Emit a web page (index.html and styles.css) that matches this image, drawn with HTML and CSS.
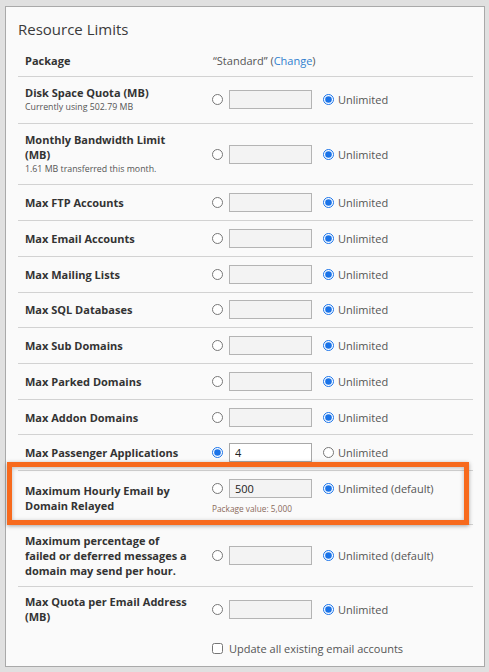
FILE: index.html
```html
<!DOCTYPE html>
<html lang="en">
<head>
<meta charset="utf-8">
<title>Resource Limits</title>
<link rel="stylesheet" href="styles.css">
</head>
<body>
<div class="panel">
  <h2 class="title">Resource Limits</h2>
  <div class="table">
    <div class="row row-pkg">
      <div class="lbl">Package</div>
      <div class="ctl pkg">“Standard” (<a href="#">Change</a>)</div>
    </div>
    <div class="row">
      <div class="lbl">Disk Space Quota (MB)<div class="sub">Currently using 502.79 MB</div></div>
      <div class="ctl"><input type="radio" name="r1"><input type="text" class="txt" disabled><input type="radio" name="r1" checked><span class="unl">Unlimited</span></div>
    </div>
    <div class="row">
      <div class="lbl">Monthly Bandwidth Limit (MB)<div class="sub">1.61 MB transferred this month.</div></div>
      <div class="ctl"><input type="radio" name="r2"><input type="text" class="txt" disabled><input type="radio" name="r2" checked><span class="unl">Unlimited</span></div>
    </div>
    <div class="row">
      <div class="lbl">Max FTP Accounts</div>
      <div class="ctl"><input type="radio" name="r3"><input type="text" class="txt" disabled><input type="radio" name="r3" checked><span class="unl">Unlimited</span></div>
    </div>
    <div class="row">
      <div class="lbl">Max Email Accounts</div>
      <div class="ctl"><input type="radio" name="r4"><input type="text" class="txt" disabled><input type="radio" name="r4" checked><span class="unl">Unlimited</span></div>
    </div>
    <div class="row">
      <div class="lbl">Max Mailing Lists</div>
      <div class="ctl"><input type="radio" name="r5"><input type="text" class="txt" disabled><input type="radio" name="r5" checked><span class="unl">Unlimited</span></div>
    </div>
    <div class="row">
      <div class="lbl">Max SQL Databases</div>
      <div class="ctl"><input type="radio" name="r6"><input type="text" class="txt" disabled><input type="radio" name="r6" checked><span class="unl">Unlimited</span></div>
    </div>
    <div class="row">
      <div class="lbl">Max Sub Domains</div>
      <div class="ctl"><input type="radio" name="r7"><input type="text" class="txt" disabled><input type="radio" name="r7" checked><span class="unl">Unlimited</span></div>
    </div>
    <div class="row">
      <div class="lbl">Max Parked Domains</div>
      <div class="ctl"><input type="radio" name="r8"><input type="text" class="txt" disabled><input type="radio" name="r8" checked><span class="unl">Unlimited</span></div>
    </div>
    <div class="row">
      <div class="lbl">Max Addon Domains</div>
      <div class="ctl"><input type="radio" name="r9"><input type="text" class="txt" disabled><input type="radio" name="r9" checked><span class="unl">Unlimited</span></div>
    </div>
    <div class="row">
      <div class="lbl">Max Passenger Applications</div>
      <div class="ctl"><input type="radio" name="r10" checked><input type="text" class="txt on" value="4"><input type="radio" name="r10"><span class="unl">Unlimited</span></div>
    </div>
    <div class="row row-hl">
      <div class="lbl">Maximum Hourly Email by Domain Relayed</div>
      <div class="ctl-stack">
        <div class="ctl"><input type="radio" name="r11"><input type="text" class="txt" value="500" disabled><input type="radio" name="r11" checked><span class="unl">Unlimited (default)</span></div>
        <div class="help">Package value: 5,000</div>
      </div>
      <div class="highlight"></div>
    </div>
    <div class="row">
      <div class="lbl">Maximum percentage of failed or deferred messages a domain may send per hour.</div>
      <div class="ctl"><input type="radio" name="r12"><input type="text" class="txt" disabled><input type="radio" name="r12" checked><span class="unl">Unlimited (default)</span></div>
    </div>
    <div class="row row-last">
      <div class="lbl">Max Quota per Email Address (MB)</div>
      <div class="ctl"><input type="radio" name="r13"><input type="text" class="txt" disabled><input type="radio" name="r13" checked><span class="unl">Unlimited</span></div>
    </div>
    <div class="row row-check">
      <div class="lbl"></div>
      <label class="ctl"><input type="checkbox"><span class="unl chk">Update all existing email accounts</span></label>
    </div>
  </div>
</div>
</body>
</html>
```

FILE: styles.css
```css
html, body {
  margin: 0;
  padding: 0;
}
body {
  background: #e0e0e0;
  padding: 6px 5px 0 5px;
  font-family: "Open Sans", "Noto Sans", sans-serif;
  color: #333;
}
.panel {
  position: relative;
  height: 659px;
  background: #fafafa;
  border: 1px solid #a9a9a9;
  padding: 0 11px 0 12px;
  box-sizing: content-box;
  width: 455px;
}
.title {
  margin: 12px 0 6px 0;
  font-size: 15px;
  line-height: 20px;
  font-weight: normal;
  color: #3a3a3a;
}
.table {
  display: flex;
  flex-direction: column;
}
.row {
  position: relative;
  display: flex;
  align-items: center;
  border-bottom: 1px solid #d2d2d2;
  padding: 7.86px 0;
}
.row-pkg {
  padding: 8px 0;
}
.row-last, .row-check {
  border-bottom: none;
}
.row-check {
  padding-top: 9px;
}
.lbl {
  width: 194px;
  flex: none;
  box-sizing: border-box;
  padding: 0 24px 0 7px;
  font-size: 11px;
  line-height: 15px;
  font-weight: bold;
  color: #333;
}
.sub {
  font-size: 8.8px;
  line-height: 15px;
  font-weight: normal;
  color: #555;
}
.ctl {
  display: flex;
  align-items: center;
}
.ctl-stack {
  display: flex;
  flex-direction: column;
}
.pkg {
  font-size: 11px;
  line-height: 15px;
  color: #555;
  padding-left: 1px;
}
.pkg a {
  color: #2f7fcf;
  text-decoration: none;
}
input[type="radio"] {
  width: 11px;
  height: 11px;
  margin: 0;
  flex: none;
  accent-color: #1a73e8;
}
input[type="checkbox"] {
  width: 11px;
  height: 11px;
  margin: 0;
}
.txt {
  width: 83px;
  height: 19px;
  box-sizing: border-box;
  margin: 0 11px 0 6px;
  border: 1px solid #b4b4b4;
  background: #f3f3f3;
  padding: 0 5px;
  font-family: "Open Sans", sans-serif;
  font-size: 11px;
  color: #222;
}
.txt.on {
  background: #fff;
  border-color: #a8a8a8;
}
.unl {
  margin-left: 4px;
  font-size: 11px;
  line-height: 15px;
  color: #555;
}
.chk {
  margin-left: 6px;
}
.help {
  margin-top: 4px;
  font-size: 8.3px;
  line-height: 14px;
  color: #8a6a5c;
}
.highlight {
  position: absolute;
  left: -11px;
  right: 4px;
  top: -9px;
  bottom: -1px;
  border: 5px solid #f76a1d;
  box-shadow: 0 1px 4px rgba(0, 0, 0, 0.35), inset 0 1px 4px rgba(0, 0, 0, 0.25);
  pointer-events: none;
}
```
